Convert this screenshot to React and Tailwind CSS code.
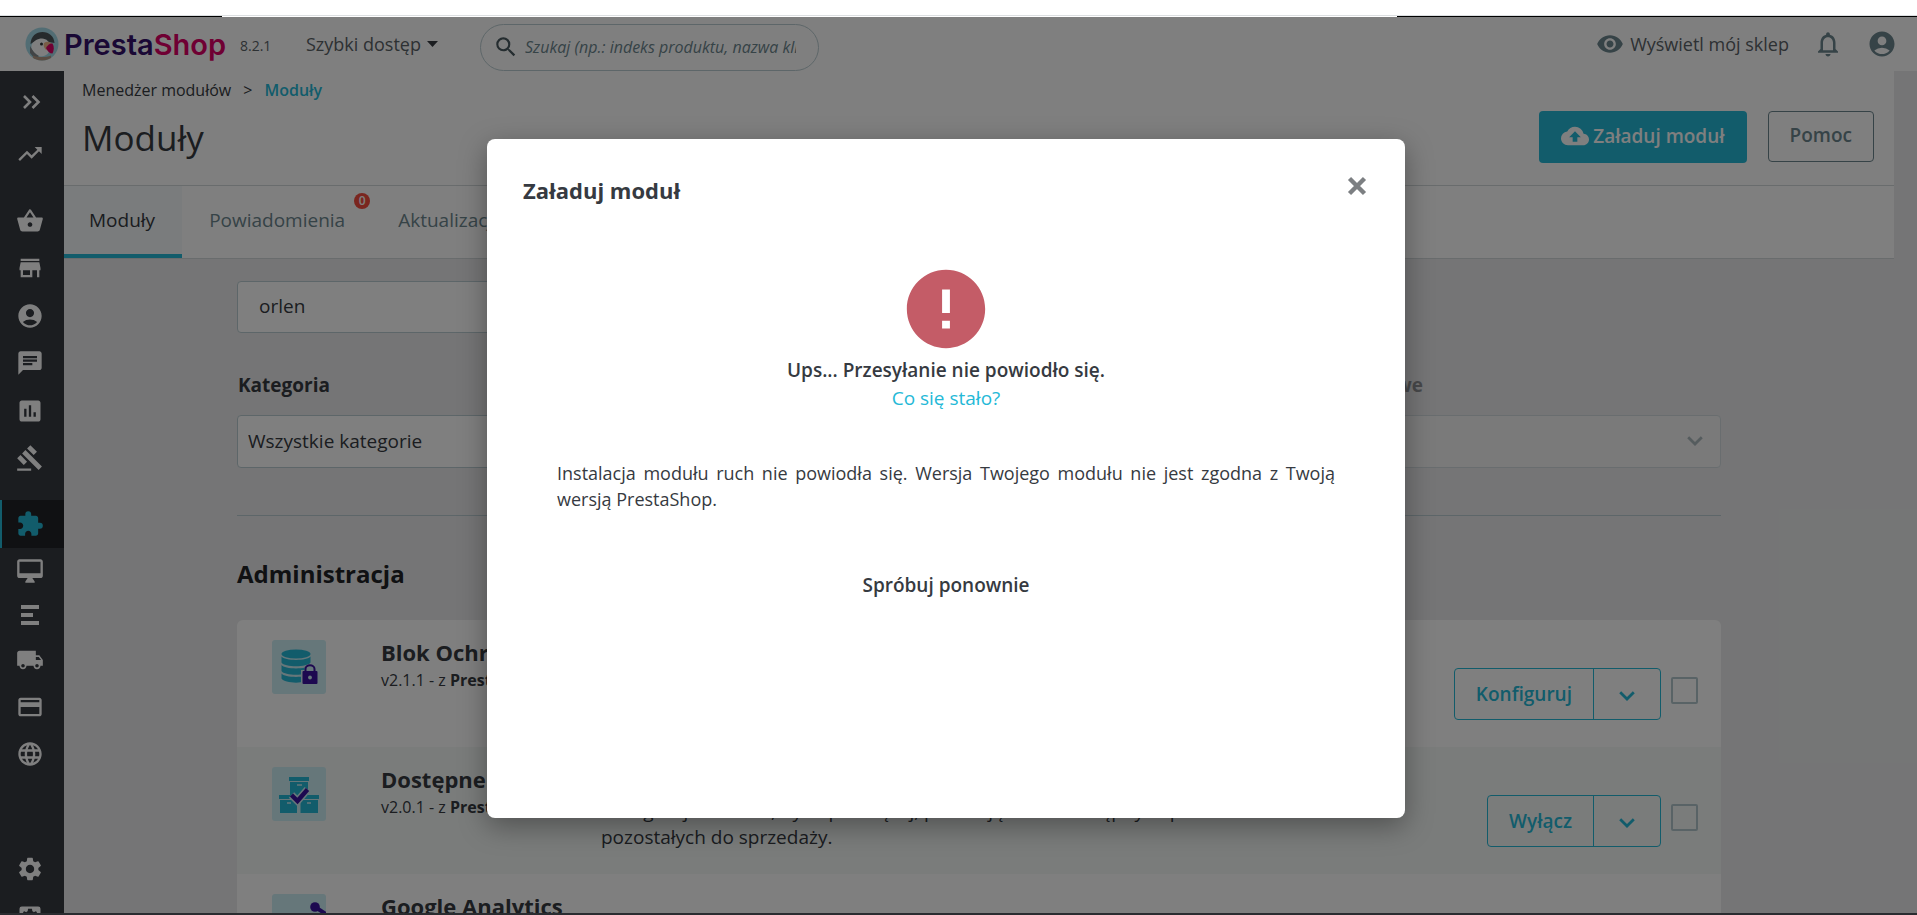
import React from "react";
import {
  MdTrendingUp, MdShoppingBasket, MdStore, MdAccountCircle, MdChat, MdAssessment, MdGavel,
  MdExtension, MdLocalShipping, MdPayment, MdLanguage, MdSettings,
  MdSettingsApplications, MdSearch, MdVisibility, MdNotificationsNone, MdCloudUpload, MdError,
} from "react-icons/md";

function ChevronsIcon() {
  return (
    <svg className="h-4 w-5" viewBox="0 0 20 16" fill="none" stroke="currentColor" strokeWidth="2.6">
      <path d="M2 2l6 6-6 6M10.500 2l6 6-6 6" />
    </svg>
  );
}

function LinesIcon() {
  return (
    <svg className="h-5 w-5" viewBox="0 0 20 20" fill="currentColor">
      <path d="M1 0h18v4H1zM1 8h12v4H1zM1 16h18v4H1z" />
    </svg>
  );
}

function MonitorIcon({ className }) {
  return (
    <svg className={className} viewBox="0 0 24 24" fill="currentColor">
      <path d="M21 2H3c-1.100 0-2 .9-2 2v12c0 1.100.9 2 2 2h7l-2 3v1h8v-1l-2-3h7c1.100 0 2-.9 2-2V4c0-1.100-.9-2-2-2zm0 12H3V4h18v10z" />
    </svg>
  );
}

function ChevronDown({ className }) {
  return (
    <svg className={className} viewBox="0 0 16 10" fill="none" stroke="currentColor" strokeWidth="2.800">
      <path d="M1.200 1.300L8 8l6.800-6.700" />
    </svg>
  );
}

function PuffinLogo() {
  return (
    <svg className="h-9 w-9 shrink-0" viewBox="0 0 36 36" aria-hidden="true">
      <defs>
        <clipPath id="puffin">
          <circle cx="18" cy="18" r="16.500" />
        </clipPath>
      </defs>
      <circle cx="18" cy="18" r="16.500" fill="#a4dbe8" />
      <g clipPath="url(#puffin)">
        <path d="M6.500 18C7 10 12 6 18.500 6S30 10 30.500 17l-5.500-1-7-3-8 3z" fill="#4c5559" />
        <path d="M7.500 19c2-4 6-6.500 10.500-6.500S26 16 26 21c0 6-4 9.500-9 9.500S6.500 25 7.500 19z" fill="#fff" />
        <path d="M6 20c3 5 5 8 9 10l-4 3-5-6z" fill="#82898c" />
        <path d="M20 17c4-3 8 0 9 3l-7 4c-2-2-3-5-2-7z" fill="#f2b98c" />
        <path d="M22 22c1.500-3 4-5 6.500-4.500 2 3 1.500 7 0 10-3 0-5-2-6.500-5.500z" fill="#df0067" />
        <circle cx="17.500" cy="18" r="1.500" fill="#33383c" />
        <path d="M9 29.500c5 2 13 2 18 0V36H9z" fill="#b59a86" />
      </g>
    </svg>
  );
}

function DatabaseLock() {
  return (
    <svg className="h-[54px] w-[54px]" viewBox="0 0 54 54" aria-hidden="true">
      <rect width="54" height="54" rx="3" fill="#cdeef5" />
      <g fill="#25b9d7">
        <ellipse cx="24" cy="14" rx="14.500" ry="4.500" />
        <path d="M9.500 16.500c3 4.500 26 4.500 29 0v6c-3 5-26 5-29 0z" />
        <path d="M9.500 25c3 4.500 26 4.500 29 0v6c-3 5-26 5-29 0z" />
        <path d="M9.500 33.500c3 4.500 26 4.500 29 0v5c-3 5.500-26 5.500-29 0z" />
      </g>
      <path d="M29 46V30h3.500c0-8 12-8 12 0H47v16z" fill="#cdeef5" />
      <rect x="30.500" y="31" width="15" height="13" rx="1" fill="#3b12a0" />
      <path d="M33.500 32v-3c0-5 9-5 9 0v3" fill="none" stroke="#3b12a0" strokeWidth="2" />
      <circle cx="38" cy="37.500" r="1.900" fill="#cdeef5" />
    </svg>
  );
}

function BoxesCheck() {
  return (
    <svg className="h-[54px] w-[54px]" viewBox="0 0 54 54" aria-hidden="true">
      <rect width="54" height="54" rx="3" fill="#cdeef5" />
      <g fill="#25b9d7">
        <path d="M17 10h20v4H17zM18 15h18v13H18zM7 28h19v4H7zM8 33h17v13H8zM28 28h19v4H28zM28.500 33H46v13H28.500z" />
      </g>
      <path d="M25 18h5M15 36h4M35 36h4" stroke="#cdeef5" strokeWidth="1.500" />
      <path d="M19.500 28l6 6L35.500 22.500" fill="none" stroke="#cdeef5" strokeWidth="7.500" />
      <path d="M19.500 28l6 6L35.500 22.500" fill="none" stroke="#3b12a0" strokeWidth="4.400" />
    </svg>
  );
}

function GraphNodes() {
  return (
    <svg className="h-[54px] w-[54px]" viewBox="0 0 54 54" aria-hidden="true">
      <rect width="54" height="54" rx="3" fill="#cdeef5" />
      <path d="M10 46l10-14 12 10" fill="none" stroke="#25b9d7" strokeWidth="3" />
      <path d="M43 13l11 7" stroke="#3b12a0" strokeWidth="4" />
      <circle cx="43" cy="13" r="4.800" fill="#3b12a0" />
    </svg>
  );
}

const mainMenu = [
  ["Zamówienia", MdShoppingBasket],
  ["Katalog", MdStore],
  ["Klienci", MdAccountCircle],
  ["Obsługa klienta", MdChat],
  ["Statystyki", MdAssessment],
  ["Aukcje", MdGavel],
];

function SideLink({ label, icon: Icon, className }) {
  return (
    <a href="#" aria-label={label} className={`flex items-center pl-4 ${className}`}>
      <Icon className="size-7" />
    </a>
  );
}

function Sidebar() {
  return (
    <nav className="flex w-16 shrink-0 flex-col bg-[#363a41] text-white">
      <button type="button" aria-label="Rozwiń menu" className="flex h-[62px] shrink-0 items-center pl-[22px]">
        <ChevronsIcon />
      </button>
      <SideLink label="Pulpit" icon={MdTrendingUp} className="h-[42px] shrink-0" />
      <div className="mt-[22px] flex h-[285px] shrink-0 flex-col">
        {mainMenu.map(([label, icon]) => (
          <SideLink key={label} label={label} icon={icon} className="flex-1" />
        ))}
      </div>
      <a href="#" aria-label="Moduły" className="mt-[18px] flex h-12 shrink-0 items-center border-l-2 border-[#25b9d7] bg-[#202226] pl-[14px] text-[#25b9d7]">
        <MdExtension className="size-7" />
      </a>
      <SideLink label="Wygląd" icon={MonitorIcon} className="h-[46px] shrink-0" />
      <a href="#" aria-label="Elementy" className="flex h-[42px] shrink-0 items-center pl-5">
        <LinesIcon />
      </a>
      <SideLink label="Wysyłka" icon={MdLocalShipping} className="h-12 shrink-0" />
      <SideLink label="Płatność" icon={MdPayment} className="h-[46px] shrink-0" />
      <SideLink label="Międzynarodowy" icon={MdLanguage} className="h-12 shrink-0" />
      <SideLink label="Preferencje" icon={MdSettings} className="mt-[67px] h-12 shrink-0" />
      <SideLink label="Zaawansowane" icon={MdSettingsApplications} className="h-12 shrink-0" />
    </nav>
  );
}

function TopBar() {
  return (
    <header className="flex h-[54px] shrink-0 items-center bg-white text-[#6c868e]">
      <div className="flex w-[480px] shrink-0 items-center pl-6">
        <a href="#" className="flex w-[216px] items-center font-['Inter',sans-serif] text-[29px] leading-none font-semibold">
          <PuffinLogo />
          <span className="pl-1 text-[#34106b]">Presta</span>
          <span className="text-[#df0067]">Shop</span>
        </a>
        <span className="w-[66px] pt-1 text-sm text-[#5a6267]">8.2.1</span>
        <button type="button" className="flex items-center gap-[6px] text-lg text-[#5a6267]">
          Szybki dostęp
          <svg className="h-[6px] w-[11px]" viewBox="0 0 11 6" fill="#363a41">
            <path d="M0 0h11L5.500 6z" />
          </svg>
        </button>
      </div>
      <label className="mt-[6px] flex h-[47px] w-[339px] items-center gap-[6px] rounded-full border border-[#bbcdd2] pr-[22px] pl-3">
        <MdSearch className="size-[26px] shrink-0 text-[#4a5a60]" />
        <input
          type="text"
          aria-label="Szukaj"
          placeholder="Szukaj (np.: indeks produktu, nazwa klienta)"
          className="min-w-0 flex-1 bg-transparent text-base italic outline-none placeholder:text-[#6c868e]"
        />
      </label>
      <div className="ml-auto flex items-center pr-5">
        <a href="#" className="flex items-center gap-[6px] text-lg text-[#5a6267]">
          <MdVisibility className="size-7 text-[#6c868e]" />
          Wyświetl mój sklep
        </a>
        <button type="button" aria-label="Powiadomienia" className="ml-6">
          <MdNotificationsNone className="size-[30px]" />
        </button>
        <button type="button" aria-label="Konto" className="ml-6">
          <MdAccountCircle className="size-[30px]" />
        </button>
      </div>
    </header>
  );
}

function PageHead() {
  return (
    <div className="mr-[23px] bg-white text-[#363a41]">
      <div className="flex h-[114px] items-start justify-between pr-5 pl-[18px]">
        <div>
          <nav aria-label="Ścieżka" className="flex gap-3 pt-[7px] text-base leading-6">
            <a href="#">Menedżer modułów</a>
            <span>&gt;</span>
            <a href="#" className="font-semibold text-[#25b9d7]">Moduły</a>
          </nav>
          <h1 className="pt-3 text-[35px] leading-[48px]">Moduły</h1>
        </div>
        <div className="flex gap-[21px] pt-10 text-[19px] font-semibold">
          <button type="button" className="flex h-[52px] items-center gap-1 rounded-[4px] bg-[#25b9d7] px-[22px] pb-[2px] text-white">
            <MdCloudUpload className="size-7" />
            Załaduj moduł
          </button>
          <button type="button" className="h-[51px] rounded-[4px] border border-[#6c868e] px-[21px] pb-[2px] text-[#6c868e]">Pomoc</button>
        </div>
      </div>
      <nav aria-label="Zakładki" className="flex h-[74px] items-stretch border-t border-b border-[#d3d8db] text-[19px] text-[#6c868e]">
        <a href="#" className="flex items-center border-b-4 border-[#25b9d7] bg-[#f4f9fb] pr-[27px] pl-[25px] text-[#363a41]">Moduły</a>
        <a href="#" className="relative flex items-center px-[27px] pb-1">
          Powiadomienia
          <span className="absolute top-[7px] right-[2px] flex size-4 items-center justify-center rounded-full bg-[#f54c3e] text-xs font-semibold text-white">0</span>
        </a>
        <a href="#" className="flex items-center px-[26px] pb-1">Aktualizacje</a>
      </nav>
    </div>
  );
}

function Picker({ id, label, value, disabled }) {
  return (
    <div className={disabled ? "opacity-50" : ""}>
      <label htmlFor={id} className="block pl-px text-[19px] leading-6 font-bold">{label}</label>
      <div className="relative mt-[18px]">
        <select
          id={id}
          disabled={disabled}
          className="h-[53px] w-full appearance-none rounded-[4px] border border-[#bbcdd2] bg-white px-[10px] text-[19px] text-[#363a41]"
        >
          <option>{value}</option>
        </select>
        <ChevronDown className="pointer-events-none absolute top-[21px] right-[18px] h-[10px] w-4 text-[#6c868e]" />
      </div>
    </div>
  );
}

const modules = [
  { icon: DatabaseLock, name: "Blok Ochrony danych", version: "v2.1.1", action: "Konfiguruj", text: "" },
  {
    icon: BoxesCheck, name: "Dostępne ilości", version: "v2.0.1", action: "Wyłącz",
    text: "Zasugeruj klientom, by kupili więcej, pokazując ilość dostępnych produktów pozostałych do sprzedaży.",
  },
  { icon: GraphNodes, name: "Google Analytics", version: "v5.0.2", action: "Konfiguruj", text: "" },
];

function ModuleRow({ icon: Icon, name, version, action, text }) {
  return (
    <li className="flex h-[127px] items-start bg-white pr-[23px] pl-[35px] even:bg-[#f4f8f7]">
      <div className="pt-5">
        <Icon />
      </div>
      <div className="w-[220px] shrink-0 pt-[18px] pl-[55px] whitespace-nowrap">
        <h3 className="text-[22px] leading-7 font-bold">{name}</h3>
        <p className="pt-[2px] text-base leading-6">{version} - z <b>PrestaShop</b></p>
      </div>
      <p className="w-[740px] shrink-0 pt-[51px] pl-[55px] text-[19px] leading-[26px]">{text}</p>
      <div className="ml-auto flex items-start gap-[10px] pt-12">
        <div className="flex h-[52px] rounded-[4px] border border-[#25b9d7] text-[19px] font-semibold text-[#25b9d7]">
          <button type="button" className="border-r border-[#25b9d7] px-[21px]">{action}</button>
          <button type="button" aria-label={`Więcej: ${name}`} className="flex w-[66px] items-center justify-center pt-1">
            <ChevronDown className="h-[10px] w-4" />
          </button>
        </div>
        <input type="checkbox" aria-label={`Zaznacz ${name}`} className="mt-[9px] size-[27px] appearance-none rounded-[2px] border-2 border-[#b3c7cd]" />
      </div>
    </li>
  );
}

function Catalog() {
  return (
    <main className="mr-[23px] px-6 text-[#363a41]">
      <div className="mx-auto max-w-[1484px] pt-[22px]">
        <input aria-label="Szukaj modułu" defaultValue="orlen" className="block h-[52px] w-3/4 rounded-[4px] border border-[#bbcdd2] bg-white px-[21px] pb-[2px] text-[19px]" />
        <div className="mt-10 grid grid-cols-3 gap-[30px] border-b border-[#bbcdd2] pb-[47px]">
          <Picker id="category" label="Kategoria" value="Wszystkie kategorie" />
          <Picker id="status" label="Status" value="Pokaż wszystkie moduły" />
          <Picker id="bulk" label="Działania grupowe" value="" disabled />
        </div>
        <h2 className="pt-[42px] text-2xl leading-8 font-bold text-[#202226]">Administracja</h2>
        <ul className="mt-[30px] overflow-hidden rounded-[6px]">
          {modules.map((m) => (
            <ModuleRow key={m.name} {...m} />
          ))}
        </ul>
      </div>
    </main>
  );
}

function UploadDialog() {
  return (
    <div className="absolute inset-0 flex items-start justify-center bg-black/50 pt-[122px] pr-[25px]">
      <section role="dialog" aria-labelledby="upload-title" className="flex h-[679px] w-[918px] flex-col rounded-[8px] bg-white text-[#363a41] shadow-[0_8px_28px_rgba(0,0,0,0.35)]">
        <div className="flex items-start justify-between pt-[31px] pr-[38px] pl-9">
          <h2 id="upload-title" className="pt-1 text-[22px] leading-8 font-bold">Załaduj moduł</h2>
          <button type="button" aria-label="Zamknij" className="pt-[6px] text-[#7c7f82]">
            <svg className="size-5" viewBox="0 0 20 20" fill="none" stroke="currentColor" strokeWidth="4.400">
              <path d="M2.500 2.500l15 15M17.500 2.500l-15 15" />
            </svg>
          </button>
        </div>
        <div className="flex flex-col items-center px-[70px] pt-14 text-center">
          <MdError className="size-[94px] text-[#c45c67]" />
          <p className="text-[19px] leading-7 font-semibold">Ups... Przesyłanie nie powiodło się.</p>
          <a href="#" className="text-[19px] leading-7 text-[#25b9d7]">Co się stało?</a>
          <p className="mt-12 w-full text-justify text-lg leading-[26px]">
            Instalacja modułu ruch nie powiodła się. Wersja Twojego modułu nie jest zgodna z Twoją wersją PrestaShop.
          </p>
          <button type="button" className="mt-[59px] text-[19px] leading-7 font-semibold">Spróbuj ponownie</button>
        </div>
      </section>
    </div>
  );
}

export default function App() {
  return (
    <div className="flex h-screen flex-col overflow-hidden bg-white font-['Open_Sans','Noto_Sans',sans-serif]">
      <div className="h-4 shrink-0 border-b border-[#dcdfe1]" />
      <div className="flex h-px shrink-0 justify-between">
        <span className="w-[222px] bg-black" />
        <span className="w-[520px] bg-black" />
      </div>
      <div className="relative flex min-h-0 flex-1 flex-col overflow-hidden bg-[#eaebec]">
        <TopBar />
        <div className="flex min-h-0 flex-1">
          <Sidebar />
          <div className="min-w-0 flex-1 overflow-hidden">
            <PageHead />
            <Catalog />
          </div>
        </div>
        <UploadDialog />
      </div>
      <div className="h-[2px] shrink-0 bg-[#2a2c30]" />
    </div>
  );
}
